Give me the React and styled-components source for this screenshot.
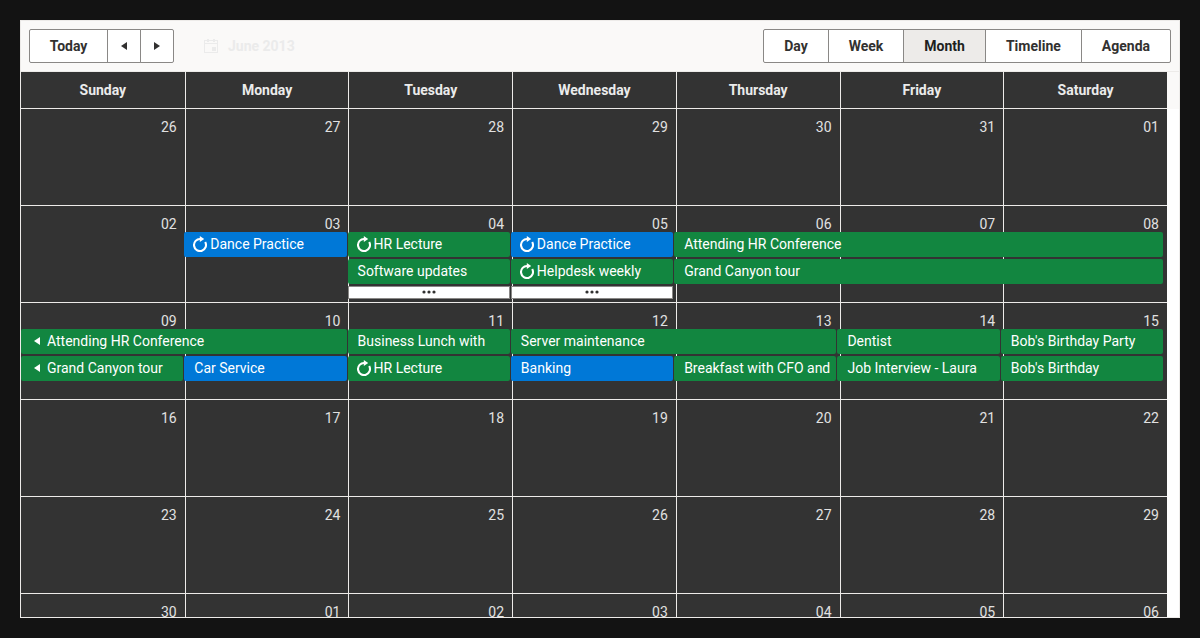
import React from "react";
import styled, { createGlobalStyle } from "styled-components";

const GlobalStyle = createGlobalStyle`
  *, *::before, *::after { box-sizing: border-box; }
  body {
    margin: 0;
    background: #131313;
    font-family: Roboto, "Liberation Sans", sans-serif;
    font-size: 14px;
    line-height: 20px;
  }
`;

const Page = styled.main`
  height: 100vh;
  padding: 20px;
`;

const Scheduler = styled.section`
  display: flex;
  flex-direction: column;
  height: 100%;
  border: 1px solid #edebe9;
  background: #fff;
  overflow: hidden;
`;

const Toolbar = styled.header`
  display: flex;
  align-items: center;
  flex: none;
  padding: 8px;
  border-bottom: 1px solid #edebe9;
  background: #faf9f8;
`;

const ButtonGroup = styled.div`
  display: flex;

  & > button + button { margin-left: -1px; }
  & > button:first-child { border-radius: 2px 0 0 2px; }
  & > button:last-child { border-radius: 0 2px 2px 0; }
`;

const Button = styled.button`
  display: flex;
  align-items: center;
  justify-content: center;
  height: 34px;
  padding: 0 ${(p) => (p.$icon ? 8 : 20)}px;
  border: 1px solid #8a8886;
  background: ${(p) => (p.$selected ? "#edebe9" : "#fff")};
  color: ${(p) => (p.$selected ? "#201f1e" : "#323130")};
  font: inherit;
  font-weight: 700;
  cursor: pointer;
`;

const TodayButton = styled(Button)`
  width: 79px;
  padding: 0;
`;

const DateButton = styled(Button)`
  gap: 9px;
  margin-left: 8px;
  margin-right: auto;
  border-color: transparent;
  background: transparent;
  color: #ebebeb;
`;

const View = styled.div`
  flex: 1;
  min-height: 0;
  display: grid;
  grid-template-columns: minmax(0, 1fr) 12px;
  overflow: hidden;
`;

const Gutter = styled.div`
  background: #fff;

  &::before {
    content: "";
    display: block;
    height: 37px;
    background: #faf9f8;
  }
`;

const Month = styled.div`
  display: grid;
  align-items: start;

  & > * { grid-area: 1 / 1; }
`;

const Table = styled.table`
  width: 100%;
  table-layout: fixed;
  border-collapse: separate;
  border-spacing: 0;
  background: #333;
  color: #ebebeb;
`;

const DayName = styled.th`
  height: 37px;
  padding: 0 8px;
  border-bottom: 1px solid #edebe9;
  font-weight: 700;
  text-align: center;

  & + & { border-left: 1px solid #edebe9; }
`;

const DayCell = styled.td`
  height: 97px;
  padding: 8px;
  border-bottom: 1px solid #edebe9;
  color: #e1e1e1;
  text-align: right;
  vertical-align: top;

  & + & { border-left: 1px solid #edebe9; }
`;

const EventLayer = styled.div`
  display: grid;
  grid-auto-rows: 97px;
  padding: 37px 3px 0 0;
  pointer-events: none;
`;

const WeekEvents = styled.div`
  display: grid;
  grid-template-columns: repeat(7, minmax(0, 1fr));
  grid-template-rows: 25px 25px 13px;
  row-gap: 2px;
  padding-top: 26px;
`;

const Event = styled.div`
  grid-column: ${(p) => p.$day} / span ${(p) => p.$span};
  grid-row: ${(p) => p.$line};
  display: flex;
  align-items: center;
  margin-right: 1px;
  padding: 0 4px 1px 8px;
  border-radius: 2px;
  background: ${(p) => (p.$blue ? "#0078d7" : "#128640")};
  color: #fff;
  white-space: nowrap;
  overflow: hidden;
  pointer-events: auto;
`;

const EventTitle = styled.span`
  padding: 0 2px;
`;

const MoreButton = styled.button`
  grid-column: ${(p) => p.$day};
  grid-row: 3;
  display: flex;
  align-items: center;
  justify-content: center;
  margin-right: 1px;
  padding: 0 0 1px;
  border: 1px solid #8a8886;
  background: #fff;
  color: #323130;
  cursor: pointer;
  pointer-events: auto;
`;

const Icon = styled.svg`
  flex: none;
  display: block;
  width: 16px;
  height: 16px;
  fill: currentColor;
`;

const LeftIcon = () => (
  <Icon viewBox="0 0 16 16" aria-hidden="true"><path d="M11 4v8L5 8z" /></Icon>
);

const RightIcon = () => (
  <Icon viewBox="0 0 16 16" aria-hidden="true"><path d="M5 4v8l6-4z" /></Icon>
);

const CalendarIcon = () => (
  <Icon viewBox="0 0 16 16" aria-hidden="true">
    <path d="M1 2h3V1h2v1h4V1h2v1h3v13H1zM2 3v2h12V3h-2v1h-2V3H6v1H4V3zM2 6v8h12V6zM9 9h4v4H9z" fillRule="evenodd" />
  </Icon>
);

const RecurIcon = () => (
  <Icon viewBox="0 0 16 16" aria-hidden="true">
    <path d="M13.2 6A6 6 0 1 1 8.4 3" fill="none" stroke="currentColor" strokeWidth="2.1" />
    <path d="M7.8 0v6l4.4-3z" />
  </Icon>
);

const MoreIcon = () => (
  <Icon viewBox="0 0 16 16" aria-hidden="true">
    <circle cx="3" cy="8" r="1.6" />
    <circle cx="8" cy="8" r="1.6" />
    <circle cx="13" cy="8" r="1.6" />
  </Icon>
);

const views = ["Day", "Week", "Month", "Timeline", "Agenda"];
const dayNames = ["Sunday", "Monday", "Tuesday", "Wednesday", "Thursday", "Friday", "Saturday"];

const weeks = [
  ["26", "27", "28", "29", "30", "31", "01"],
  ["02", "03", "04", "05", "06", "07", "08"],
  ["09", "10", "11", "12", "13", "14", "15"],
  ["16", "17", "18", "19", "20", "21", "22"],
  ["23", "24", "25", "26", "27", "28", "29"],
  ["30", "01", "02", "03", "04", "05", "06"],
];

const eventsByWeek = [
  { events: [], more: [] },
  {
    events: [
      { title: "Dance Practice", day: 2, line: 1, blue: true, recurring: true },
      { title: "HR Lecture", day: 3, line: 1, recurring: true },
      { title: "Dance Practice", day: 4, line: 1, blue: true, recurring: true },
      { title: "Attending HR Conference", day: 5, span: 3, line: 1 },
      { title: "Software updates", day: 3, line: 2 },
      { title: "Helpdesk weekly", day: 4, line: 2, recurring: true },
      { title: "Grand Canyon tour", day: 5, span: 3, line: 2 },
    ],
    more: [3, 4],
  },
  {
    events: [
      { title: "Attending HR Conference", day: 1, span: 2, line: 1, continued: true },
      { title: "Business Lunch with", day: 3, line: 1 },
      { title: "Server maintenance", day: 4, span: 2, line: 1 },
      { title: "Dentist", day: 6, line: 1 },
      { title: "Bob's Birthday Party", day: 7, line: 1 },
      { title: "Grand Canyon tour", day: 1, line: 2, continued: true },
      { title: "Car Service", day: 2, line: 2, blue: true },
      { title: "HR Lecture", day: 3, line: 2, recurring: true },
      { title: "Banking", day: 4, line: 2, blue: true },
      { title: "Breakfast with CFO and", day: 5, line: 2 },
      { title: "Job Interview - Laura", day: 6, line: 2 },
      { title: "Bob's Birthday", day: 7, line: 2 },
    ],
    more: [],
  },
];

export default function App() {
  return (
    <Page>
      <GlobalStyle />
      <Scheduler>
        <Toolbar>
          <ButtonGroup>
            <TodayButton type="button">Today</TodayButton>
            <Button type="button" $icon aria-label="Previous"><LeftIcon /></Button>
            <Button type="button" $icon aria-label="Next"><RightIcon /></Button>
          </ButtonGroup>
          <DateButton type="button"><CalendarIcon />June 2013</DateButton>
          <ButtonGroup>
            {views.map((name) => (
              <Button key={name} type="button" $selected={name === "Month"} aria-pressed={name === "Month"}>
                {name}
              </Button>
            ))}
          </ButtonGroup>
        </Toolbar>
        <View>
          <Month>
            <Table>
              <thead>
                <tr>{dayNames.map((name) => <DayName key={name} scope="col">{name}</DayName>)}</tr>
              </thead>
              <tbody>
                {weeks.map((days, week) => (
                  <tr key={week}>{days.map((day) => <DayCell key={day}>{day}</DayCell>)}</tr>
                ))}
              </tbody>
            </Table>
            <EventLayer>
              {eventsByWeek.map(({ events, more }, week) => (
                <WeekEvents key={week}>
                  {events.map((e) => (
                    <Event key={`${e.day}-${e.line}`} $day={e.day} $span={e.span || 1} $line={e.line} $blue={e.blue}>
                      {e.recurring && <RecurIcon />}
                      {e.continued && <LeftIcon />}
                      <EventTitle>{e.title}</EventTitle>
                    </Event>
                  ))}
                  {more.map((day) => (
                    <MoreButton key={day} type="button" $day={day} aria-label="More events"><MoreIcon /></MoreButton>
                  ))}
                </WeekEvents>
              ))}
            </EventLayer>
          </Month>
          <Gutter />
        </View>
      </Scheduler>
    </Page>
  );
}
